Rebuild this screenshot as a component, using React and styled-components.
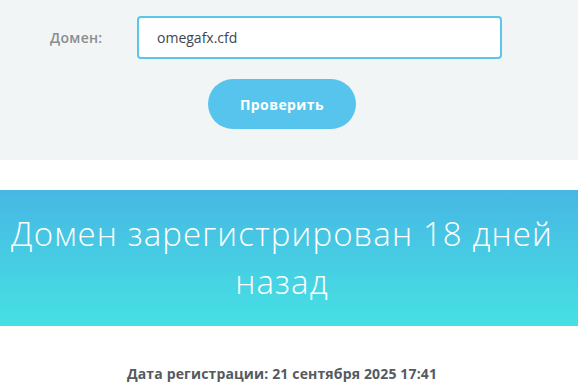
import React from 'react';
import styled, { createGlobalStyle } from 'styled-components';

const Global = createGlobalStyle`
  html, body {
    margin: 0;
    padding: 0;
    background: #fff;
    font-family: "Open Sans", "Liberation Sans", sans-serif;
  }
`;

const App = () => {
  return (
    <Page>
      <Global />
      <FormPanel>
        <Row>
          <Label>Домен:</Label>
          <Input defaultValue="omegafx.cfd" />
        </Row>
        <Button>Проверить</Button>
      </FormPanel>
      <Banner>
        <BannerTitle>Домен зарегистрирован 18 дней назад</BannerTitle>
      </Banner>
      <Info>Дата регистрации: 21 сентября 2025 17:41</Info>
    </Page>
  );
};

export default App;

// content is centered in a 564px column (page has a scrollbar gutter on the right)
const Page = styled.div`
  width: 578px;
  height: 383px;
  overflow: hidden;
  display: flex;
  flex-direction: column;
`;

const FormPanel = styled.div`
  height: 160px;
  box-sizing: border-box;
  background: #f2f5f6;
  padding: 16px 14px 0 0;
  display: flex;
  flex-direction: column;
  align-items: center;
`;

const Row = styled.div`
  width: 100%;
  display: flex;
  align-items: center;
  padding-left: 50px;
  box-sizing: border-box;
`;

const Label = styled.span`
  width: 87px;
  font-size: 14px;
  font-weight: 600;
  letter-spacing: 0.3px;
  color: #8a8d8f;
`;

const Input = styled.input`
  width: 365px;
  height: 43px;
  box-sizing: border-box;
  border: 2px solid #5cc5ea;
  border-radius: 4px;
  background: #fff;
  padding: 0 18px;
  font-family: "Open Sans", "Liberation Sans", sans-serif;
  font-size: 14px;
  color: #3d4650;
  outline: none;
`;

const Button = styled.button`
  margin-top: 20px;
  width: 148px;
  height: 50px;
  border: none;
  border-radius: 25px;
  background: #56c4ec;
  color: #fff;
  font-family: "Open Sans", "Liberation Sans", sans-serif;
  font-size: 14px;
  font-weight: 700;
  letter-spacing: 0.4px;
`;

const Banner = styled.div`
  margin-top: 30px;
  height: 136px;
  background: linear-gradient(#47b7e3, #46e1e3);
  display: flex;
  align-items: center;
  justify-content: center;
  padding: 0 14px 0 0;
`;

const BannerTitle = styled.h1`
  margin: 0;
  text-align: center;
  font-size: 33px;
  line-height: 48px;
  font-weight: 300;
  letter-spacing: 1.1px;
  color: #fff;
`;

const Info = styled.div`
  margin-top: 38px;
  padding-right: 14px;
  text-align: center;
  font-size: 14px;
  font-weight: 700;
  letter-spacing: 0.15px;
  color: #555a5f;
`;
